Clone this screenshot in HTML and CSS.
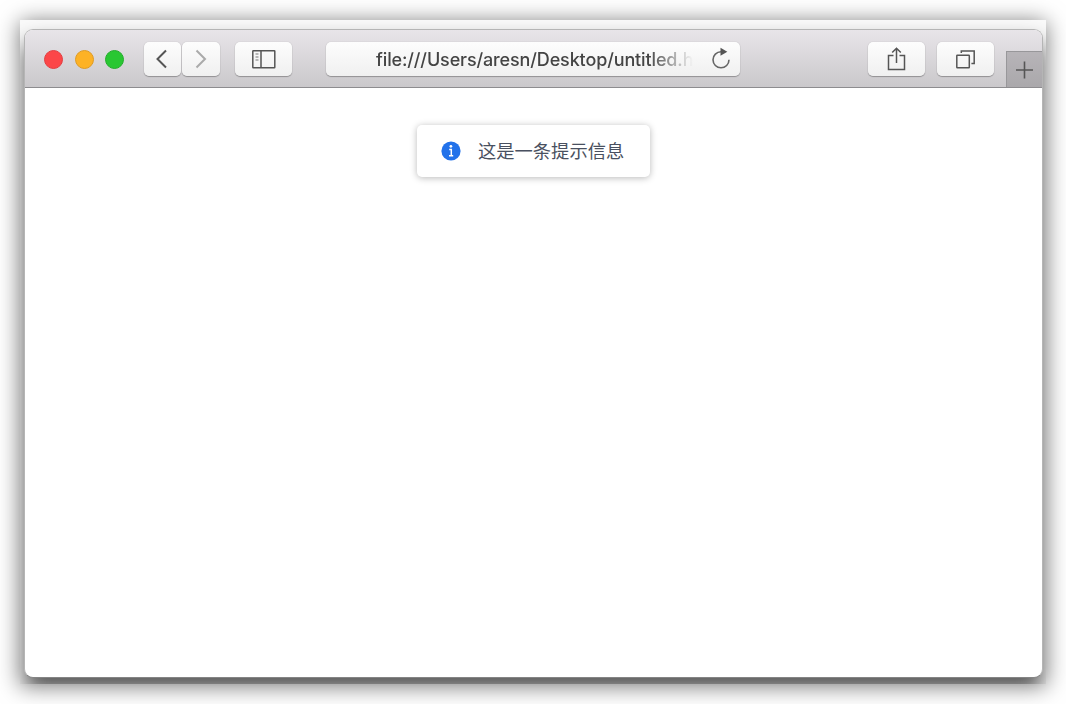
FILE: index.html
```html
<!DOCTYPE html>
<html lang="zh-CN">
<head>
<meta charset="utf-8">
<title>Message</title>
<link rel="stylesheet" href="styles.css">
</head>
<body>
<div class="frame">
  <div class="window">
    <header class="toolbar">
      <div class="lights"><span class="light red"></span><span class="light yellow"></span><span class="light green"></span></div>
      <div class="nav">
        <div class="btn back"><svg width="38" height="34" viewBox="0 0 38 34"><path d="M22 8.500l-8.500 8.500L22 25.500" fill="none" stroke="#555" stroke-width="2"/></svg></div>
        <div class="btn forward"><svg width="38" height="34" viewBox="0 0 38 34"><path d="M14.500 8.500l8.500 8.500-8.500 8.500" fill="none" stroke="#aaa" stroke-width="2"/></svg></div>
      </div>
      <div class="btn wide sidebar"><svg width="57" height="34" viewBox="0 0 57 34" fill="none" stroke="#555" stroke-width="1.500"><rect x="17.800" y="8.800" width="22" height="17" rx=".5"/><path d="M26 9v17"/><path d="M20.500 12h3M20.500 15h3M20.500 18h3" stroke="#777" stroke-width="1.200"/></svg></div>
      <div class="address">
        <span class="url">file:///Users/aresn/Desktop/untitled.h</span>
        <svg class="reload" width="22" height="24" viewBox="0 0 22 24"><path d="M11 4.800A8 8 0 1 0 19 12.800" fill="none" stroke="#666" stroke-width="1.600"/><path d="M10.500 .8v8l6.800-4z" fill="#555"/></svg>
      </div>
      <div class="btn wide share"><svg width="57" height="34" viewBox="0 0 57 34" fill="none" stroke="#555" stroke-width="1.500"><path d="M25.500 13.500h-5v14h16v-14h-5M28.500 21V6.500M24.200 10.500l4.300-4.300 4.300 4.300"/></svg></div>
      <div class="btn wide tabs"><svg width="57" height="34" viewBox="0 0 57 34" fill="none" stroke="#555" stroke-width="1.500"><rect x="19.800" y="13.300" width="12.500" height="12.500" rx=".5"/><path d="M24.300 11V9h12.900v12.500h-2.800"/></svg></div>
      <div class="newtab"><svg width="36" height="34" viewBox="0 0 36 34"><path d="M17.500 9.500v17M9 18h17" stroke="#555" stroke-width="1.600"/></svg></div>
    </header>
    <main class="page">
      <div class="message">
        <svg width="20" height="20" viewBox="0 0 20 20"><circle cx="10" cy="10" r="9.600" fill="#2272ea"/><circle cx="9.900" cy="5.300" r="1.350" fill="#fff"/><path d="M8.200 8.500h2.100v6M8 14.800h4.200" fill="none" stroke="#fff" stroke-width="1.500"/></svg>
        <span class="text">这是一条提示信息</span>
      </div>
    </main>
  </div>
</div>
</body>
</html>
```
FILE: styles.css
```css
* { box-sizing: border-box; }
body {
  margin: 0;
  height: 704px;
  padding: 20px;
  overflow: hidden;
  background: #fff;
  font-family: "Liberation Sans", "Noto Sans CJK SC", sans-serif;
}
svg { display: block; flex: none; }
.frame {
  width: 1026px;
  height: 664px;
  padding: 9px 3px 5px 4px;
  overflow: hidden;
  background: #fafafa;
  box-shadow: 0 2px 21px rgba(0, 0, 0, .55);
}
.window {
  display: flex;
  flex-direction: column;
  width: 1019px;
  height: 649px;
  border: 1px solid #b5b5b5;
  border-bottom-color: #858585;
  border-radius: 9px;
  overflow: hidden;
  background: #fff;
  box-shadow: 0 14px 22px rgba(0, 0, 0, .65);
}
.toolbar {
  display: flex;
  align-items: flex-start;
  height: 58px;
  flex: none;
  padding: 12px 0 0 19px;
  border-bottom: 1px solid #8d8c8f;
  background: linear-gradient(#e8e5e9, #cac8cb);
}
.lights { display: flex; gap: 11.600px; padding-top: 8px; }
.light { width: 19px; height: 19px; border-radius: 50%; }
.red { background: #fc4648; border: 1px solid #e33e41; }
.yellow { background: #fdb225; border: 1px solid #df9b24; }
.green { background: #29c732; border: 1px solid #24ad2c; }
.nav { display: flex; gap: 1px; margin-left: 19.800px; }
.btn, .address {
  height: 34px;
  border-radius: 5px;
  background: linear-gradient(#fdfdfd, #f0f0f0);
  box-shadow: 0 0 1px rgba(0, 0, 0, .25), 0 1px 1px rgba(0, 0, 0, .28);
}
.back { width: 37px; }
.forward { width: 38px; }
.wide { width: 57px; }
.sidebar { margin-left: 15px; }
.address {
  display: flex;
  align-items: center;
  width: 414px;
  margin-left: 34px;
  padding-left: 50px;
}
.url {
  width: 317px;
  height: 34px;
  padding-top: 2px;
  white-space: nowrap;
  font: 500 18px/32px Inter, "Liberation Sans", sans-serif;
  letter-spacing: -.13px;
  color: #444;
  -webkit-mask-image: linear-gradient(90deg, #000 86%, transparent);
  mask-image: linear-gradient(90deg, #000 86%, transparent);
}
.reload { margin-left: 17px; }
.share { margin-left: 128px; }
.tabs { margin-left: 12px; }
.newtab {
  width: 36px;
  height: 36px;
  margin: 9px 0 0 12px;
  border-left: 1px solid #98979a;
  border-top: 1px solid #98979a;
  background: linear-gradient(#b7b4b8, #aaa8ab);
}
.page { display: flex; justify-content: center; padding-top: 37px; }
.message {
  display: flex;
  align-items: center;
  gap: 17px;
  width: 233px;
  height: 52px;
  padding-left: 24px;
  border-radius: 5px;
  background: #fff;
  box-shadow: 0 1px 7px rgba(0, 0, 0, .28);
  font: 18.300px/26px "Noto Sans CJK SC", sans-serif;
  color: #495060;
  white-space: nowrap;
}
.text { padding-bottom: 2px; }
```
